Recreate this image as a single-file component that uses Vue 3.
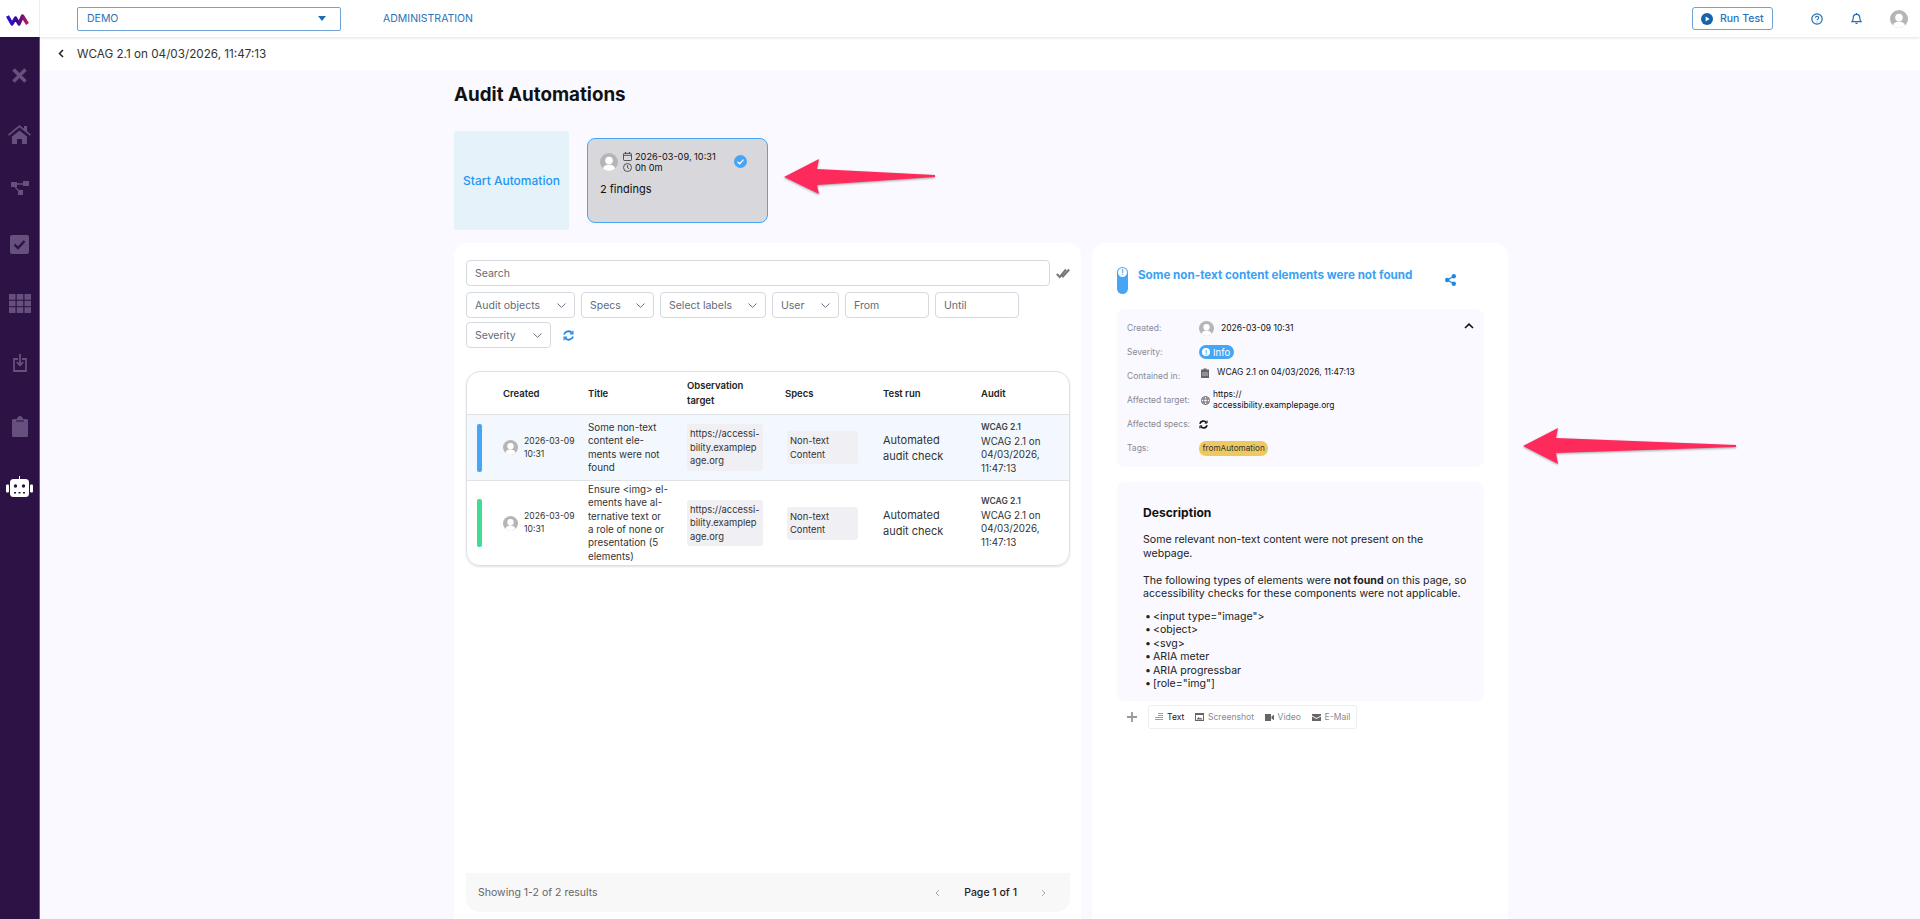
<template>
  <div class="app">
    <header class="topbar">
      <div class="logo-box">
        <svg width="23" height="12" viewBox="0 0 23 12">
          <defs>
            <linearGradient id="logoGrad" x1="0" x2="1" y1="0" y2="0">
              <stop offset="0" stop-color="#2a10e0" />
              <stop offset="0.5" stop-color="#3a0a8a" />
              <stop offset="1" stop-color="#c0185a" />
            </linearGradient>
          </defs>
          <path d="M1.500 2 L6 10 L9.500 4 L13 10 L16.500 2 L21.500 10" fill="none" stroke="url(#logoGrad)" stroke-width="3.400" stroke-linejoin="round" />
        </svg>
      </div>
      <div class="project-select">
        <span>DEMO</span>
        <svg width="8" height="5" viewBox="0 0 8 5"><path d="M0 0h8L4 5z" fill="#1f6cb4" /></svg>
      </div>
      <a class="admin-link">ADMINISTRATION</a>
      <div class="topbar-right">
        <button class="run-btn">
          <svg width="12" height="12" viewBox="0 0 12 12">
            <circle cx="6" cy="6" r="6" fill="#1464ad" />
            <path d="M4.600 3.400 L8.600 6 L4.600 8.600z" fill="#fff" />
          </svg>
          Run Test
        </button>
        <svg class="tb-icon" width="12" height="12" viewBox="0 0 12 12" fill="none" stroke="#1f6cb4">
          <circle cx="6" cy="6" r="5.200" stroke-width="1.200" />
          <path d="M4.400 4.800a1.600 1.600 0 1 1 2.400 1.400c-.6.3-.8.6-.8 1.100" stroke-width="1.100" />
          <circle cx="6" cy="9" r=".5" fill="#1f6cb4" stroke="none" />
        </svg>
        <svg class="tb-icon" width="11" height="13" viewBox="0 0 11 13" fill="none" stroke="#1f6cb4" stroke-width="1.200">
          <path d="M1 9.600h9c-1-1-1.200-2-1.200-3.600 0-2-1.300-3.600-3.300-3.600S2.200 4 2.200 6c0 1.600-.2 2.600-1.200 3.600z" />
          <path d="M4.500 11.400h2M5.500 1v1.200" />
        </svg>
        <svg class="avatar" width="18" height="18" viewBox="0 0 18 18">
          <circle cx="9" cy="9" r="9" fill="#b5b5b5" />
          <circle cx="9" cy="7.500" r="3.800" fill="#fff" />
          <path d="M2.800 15.500c1-3 3.500-4 6.200-4s5.200 1 6.200 4A9 9 0 0 1 2.800 15.500z" fill="#fff" />
        </svg>
      </div>
    </header>

    <div class="body">
      <aside class="sidebar">
        <nav class="side-nav">
          <svg width="15" height="15" viewBox="0 0 15 15"><path d="M1.500 1.500l12 12M13.500 1.500l-12 12" stroke="#66507d" stroke-width="3.600" /></svg>
          <svg width="23" height="19" viewBox="0 0 23 19" fill="#66507d"><path d="M11.500 0L0 9.500l1 1.200L11.500 2.200 22 10.700l1-1.200-4-3.300V1h-3v2.700zM4 11.500l7.500-6 7.500 6V19h-5v-5H9v5H4z" /></svg>
          <svg width="18" height="14" viewBox="0 0 18 14" fill="#66507d"><path d="M0 1h6v5H0zM12 0h6v5h-6zM7 9h5v5H7z" /><path d="M6 3h6M4 6l4 4" stroke="#66507d" stroke-width="1.300" /></svg>
          <svg width="19" height="19" viewBox="0 0 19 19"><rect width="19" height="19" rx="2" fill="#66507d" /><path d="M4.500 9.500l3.500 3.500 6.500-7" fill="none" stroke="#2d1245" stroke-width="2.400" /></svg>
          <svg width="22" height="19" viewBox="0 0 22 19" fill="#66507d"><path d="M0 0h6.500v5.700H0zM7.700 0h6.600v5.700H7.700zM15.500 0H22v5.700h-6.500zM0 6.700h6.500v5.600H0zM7.700 6.700h6.600v5.600H7.700zM15.500 6.700H22v5.600h-6.500zM0 13.300h6.500V19H0zM7.700 13.300h6.600V19H7.700zM15.500 13.300H22V19h-6.500z" /></svg>
          <svg width="14" height="18" viewBox="0 0 14 18" fill="none" stroke="#66507d" stroke-width="1.800"><path d="M5 5H1v12h12V5H9" /><path d="M7 0v11M3.800 8L7 11.500 10.200 8" /></svg>
          <svg width="16" height="21" viewBox="0 0 16 21" fill="#66507d"><path d="M1.500 3H5c0-1.500 1.300-3 3-3s3 1.500 3 3h3.500A1.500 1.500 0 0 1 16 4.500v15a1.500 1.500 0 0 1-1.500 1.500h-13A1.500 1.500 0 0 1 0 19.500v-15A1.500 1.500 0 0 1 1.500 3z" /><path d="M4 5h8" stroke="#2d1245" stroke-width="1" /></svg>
          <svg width="27" height="21" viewBox="0 0 27 21" fill="#fff"><path d="M13 0h1v3h-1z" /><rect x="4" y="3" width="19" height="18" rx="3.500" /><rect x="0" y="8.500" width="3" height="8" rx="1" /><rect x="24" y="8.500" width="3" height="8" rx="1" /><circle cx="9.500" cy="10" r="1.700" fill="#2d1245" /><circle cx="17.500" cy="10" r="1.700" fill="#2d1245" /><path d="M8 16h2v1.500H8zM12.500 16h2v1.500h-2zM17 16h2v1.500h-2z" fill="#2d1245" /></svg>
        </nav>
      </aside>

      <main class="main">
        <div class="subheader">
          <svg width="6" height="9" viewBox="0 0 6 9"><path d="M5 1L1.500 4.500 5 8" fill="none" stroke="#222" stroke-width="1.500" /></svg>
          <span>WCAG 2.1 on 04/03/2026, 11:47:13</span>
        </div>

        <div class="content">
          <h1 class="page-title">Audit Automations</h1>

          <div class="automation-row">
            <div class="start-card">Start Automation</div>
            <div class="run-card">
              <div class="run-head">
                <svg width="18" height="18" viewBox="0 0 18 18">
                  <circle cx="9" cy="9" r="9" fill="#b5b5b5" />
                  <circle cx="9" cy="7.500" r="3.800" fill="#fff" />
                  <path d="M2.800 15.500c1-3 3.500-4 6.200-4s5.200 1 6.200 4A9 9 0 0 1 2.800 15.500z" fill="#fff" />
                </svg>
                <div class="run-meta">
                  <div class="meta-line">
                    <svg width="9" height="9" viewBox="0 0 9 9" fill="none" stroke="#333" stroke-width=".8"><rect x=".5" y="1.300" width="8" height="7.200" rx="1" /><path d="M.5 3.300h8M2.500 0v2M6.500 0v2" /></svg>
                    2026-03-09, 10:31
                  </div>
                  <div class="meta-line">
                    <svg width="9" height="9" viewBox="0 0 9 9" fill="none" stroke="#333" stroke-width=".8"><circle cx="4.500" cy="4.500" r="4" /><path d="M4.500 2v2.700l1.600 1" /></svg>
                    0h 0m
                  </div>
                </div>
                <svg class="run-check" width="13" height="13" viewBox="0 0 13 13">
                  <circle cx="6.500" cy="6.500" r="6.500" fill="#46a6f5" />
                  <path d="M3.500 6.800l2.200 2 3.800-4.200" fill="none" stroke="#fff" stroke-width="1.300" />
                </svg>
              </div>
              <div class="run-findings">2 findings</div>
            </div>
          </div>

          <div class="panels">
            <section class="list-panel">
              <div class="search-row">
                <div class="field search">Search</div>
                <svg width="14" height="11" viewBox="0 0 14 11" fill="none" stroke="#777" stroke-width="2"><path d="M.8 6l3 3L10 1.500M5 6l2 2.500 6.200-7" /></svg>
              </div>
              <div class="filters">
                <div v-for="f in filters" :key="f.label" class="field" :class="f.cls">
                  {{ f.label }}
                  <svg v-if="f.select" width="9" height="5" viewBox="0 0 9 5"><path d="M.5.500l4 3.800 4-3.800" fill="none" stroke="#6b7280" stroke-width="1" /></svg>
                </div>
                <svg class="refresh" width="11" height="11" viewBox="0 0 11 11" fill="none" stroke="#1e88e5" stroke-width="1.800">
                  <path d="M1 4.500A4.600 4.600 0 0 1 9 3M10 6.500A4.600 4.600 0 0 1 2 8" />
                  <path d="M9.900.800v3H7M1.100 10.200v-3H4" stroke-width="1.200" />
                </svg>
              </div>

              <div class="table">
                <div class="tr thead">
                  <div></div>
                  <div>Created</div>
                  <div>Title</div>
                  <div>Observation<br />target</div>
                  <div>Specs</div>
                  <div>Test run</div>
                  <div>Audit</div>
                </div>
                <div v-for="row in rows" :key="row.title" class="tr" :class="{ active: row.active }">
                  <div class="bar-cell"><span class="sev-bar" :class="row.sev"></span></div>
                  <div class="created">
                    <svg width="15" height="15" viewBox="0 0 18 18">
                      <circle cx="9" cy="9" r="9" fill="#b5b5b5" />
                      <circle cx="9" cy="7.500" r="3.800" fill="#fff" />
                      <path d="M2.800 15.500c1-3 3.500-4 6.200-4s5.200 1 6.200 4A9 9 0 0 1 2.800 15.500z" fill="#fff" />
                    </svg>
                    <span>2026-03-09<br />10:31</span>
                  </div>
                  <div class="title-cell">{{ row.title }}</div>
                  <div><span class="chip chip-url">https://accessi-<br />bility.examplep<br />age.org</span></div>
                  <div><span class="chip chip-spec">Non-text<br />Content</span></div>
                  <div class="testrun">Automated<br />audit check</div>
                  <div class="audit"><b>WCAG 2.1</b><br />WCAG 2.1 on<br />04/03/2026,<br />11:47:13</div>
                </div>
              </div>

              <div class="pager">
                <span>Showing 1-2 of 2 results</span>
                <div class="pager-nav">
                  <svg width="5" height="8" viewBox="0 0 5 8"><path d="M4 1L1 4l3 3" fill="none" stroke="#aaa" /></svg>
                  <b>Page 1 of 1</b>
                  <svg width="5" height="8" viewBox="0 0 5 8"><path d="M1 1l3 3-3 3" fill="none" stroke="#aaa" /></svg>
                </div>
              </div>
            </section>

            <section class="detail-panel">
              <div class="detail-head">
                <div class="sev-pill"><span>!</span></div>
                <h2>Some non-text content elements were not found</h2>
                <svg class="share" width="11" height="12" viewBox="0 0 11 12" fill="#1e88e5">
                  <circle cx="2.200" cy="6" r="2.200" /><circle cx="8.800" cy="2.200" r="2.200" /><circle cx="8.800" cy="9.800" r="2.200" />
                  <path d="M2.200 6l6.600-3.800M2.200 6l6.600 3.800" stroke="#1e88e5" stroke-width="1.200" />
                </svg>
              </div>

              <div class="info-card">
                <svg class="collapse" width="10" height="6" viewBox="0 0 10 6"><path d="M1 5l4-3.800L9 5" fill="none" stroke="#111" stroke-width="1.600" /></svg>
                <div class="info-grid">
                  <div class="lbl">Created:</div>
                  <div class="val">
                    <svg width="15" height="15" viewBox="0 0 18 18">
                      <circle cx="9" cy="9" r="9" fill="#b5b5b5" />
                      <circle cx="9" cy="7.500" r="3.800" fill="#fff" />
                      <path d="M2.800 15.500c1-3 3.500-4 6.200-4s5.200 1 6.200 4A9 9 0 0 1 2.800 15.500z" fill="#fff" />
                    </svg>
                    <span class="after-avatar">2026-03-09 10:31</span>
                  </div>
                  <div class="lbl">Severity:</div>
                  <div class="val"><span class="sev-badge"><i>!</i>Info</span></div>
                  <div class="lbl">Contained in:</div>
                  <div class="val val-raised">
                    <svg class="val-icon" width="8" height="10" viewBox="0 0 8 10" fill="#666"><path d="M0 1.500h2.500V.5h3v1H8V10H0z" /><path d="M2 4v4M4 4v4M6 4v4" stroke="#f9f9ff" stroke-width=".6" /></svg>
                    WCAG 2.1 on 04/03/2026, 11:47:13
                  </div>
                  <div class="lbl">Affected target:</div>
                  <div class="val">
                    <svg class="val-icon globe" width="9" height="9" viewBox="0 0 9 9" fill="none" stroke="#666" stroke-width=".9"><circle cx="4.500" cy="4.500" r="4" /><ellipse cx="4.500" cy="4.500" rx="1.800" ry="4" /><path d="M.5 3h8M.5 6h8" /></svg>
                    <span>https://<br />accessibility.examplepage.org</span>
                  </div>
                  <div class="lbl">Affected specs:</div>
                  <div class="val">
                    <svg width="9" height="9" viewBox="0 0 11 11" fill="none" stroke="#111" stroke-width="2">
                      <path d="M1 4.500A4.600 4.600 0 0 1 9 3M10 6.500A4.600 4.600 0 0 1 2 8" />
                      <path d="M9.900.800v3H7M1.100 10.200v-3H4" stroke-width="1.200" />
                    </svg>
                  </div>
                  <div class="lbl">Tags:</div>
                  <div class="val"><span class="tag">fromAutomation</span></div>
                </div>
              </div>

              <div class="desc-card">
                <h3>Description</h3>
                <p>Some relevant non-text content were not present on the webpage.</p>
                <p>The following types of elements were <b>not found</b> on this page, so accessibility checks for these components were not applicable.</p>
                <ul>
                  <li>&lt;input type="image"&gt;</li>
                  <li>&lt;object&gt;</li>
                  <li>&lt;svg&gt;</li>
                  <li>ARIA meter</li>
                  <li>ARIA progressbar</li>
                  <li>[role="img"]</li>
                </ul>
              </div>

              <div class="composer">
                <svg width="10" height="10" viewBox="0 0 10 10"><path d="M5 0v10M0 5h10" stroke="#999" stroke-width="1.800" /></svg>
                <div class="composer-tabs">
                  <span class="tab on">
                    <svg width="8" height="8" viewBox="0 0 8 8" stroke="#888" stroke-width=".8"><path d="M3 .5h5M3 2.500h5M0 4.500h8M0 6.500h8" /></svg>
                    Text
                  </span>
                  <span class="tab">
                    <svg width="9" height="8" viewBox="0 0 9 8" fill="#666"><path d="M0 0h9v8H0zM1 2v5h7V2z" fill-rule="evenodd" /><path d="M1.500 6.500l2-2.500 1.500 1.500 1-1 1.500 2z" /></svg>
                    Screenshot
                  </span>
                  <span class="tab">
                    <svg width="9" height="7" viewBox="0 0 9 7" fill="#666"><path d="M0 0h6v7H0zM6.500 2.500L9 .8v5.400L6.500 4.500z" /></svg>
                    Video
                  </span>
                  <span class="tab">
                    <svg width="9" height="7" viewBox="0 0 9 7" fill="#666"><path d="M0 0h9v1.500L4.500 4 0 1.500zM0 2.500L4.500 5 9 2.500V7H0z" /></svg>
                    E-Mail
                  </span>
                </div>
              </div>
            </section>
          </div>
        </div>
      </main>
    </div>

    <!-- annotation arrows drawn over the screenshot -->
    <svg class="arrow arrow-one" width="160" height="44" viewBox="0 0 160 44">
      <path d="M2 21L37 3 35 13 153 19 153 21 35 29 37 38z" fill="#fe2a5c" />
    </svg>
    <svg class="arrow arrow-two" width="224" height="44" viewBox="0 0 224 44">
      <path d="M2 19L37 1 35 11 215 18 215 20 35 26 37 37z" fill="#fe2a5c" />
    </svg>
  </div>
</template>

<script setup>
const filters = [
  { label: 'Audit objects', cls: 'f-audit', select: true },
  { label: 'Specs', cls: 'f-specs', select: true },
  { label: 'Select labels', cls: 'f-labels', select: true },
  { label: 'User', cls: 'f-user', select: true },
  { label: 'From', cls: 'f-date', select: false },
  { label: 'Until', cls: 'f-date', select: false },
  { label: 'Severity', cls: 'f-sev', select: true }
]

const rows = [
  { title: 'Some non-text\ncontent ele-\nments were not\nfound', sev: 'blue', active: true },
  { title: 'Ensure <img> el-\nements have al-\nternative text or\na role of none or\npresentation (5\nelements)', sev: 'green', active: false }
]
</script>

<style>
html, body { margin: 0; background: #f9f9ff; }
</style>

<style scoped>
.app {
  position: relative;
  height: 919px;
  overflow: hidden;
  background: #f9f9ff;
  font-family: Inter, "Liberation Sans", sans-serif;
  color: #222;
  font-size: 11px;
}

/* top bar */
.topbar {
  display: flex;
  align-items: center;
  height: 37px;
  background: #fff;
  box-shadow: 0 1px 3px rgba(0, 0, 0, 0.12);
  position: relative;
  z-index: 2;
}
.logo-box {
  width: 40px;
  height: 37px;
  box-sizing: border-box;
  border-right: 1px solid #eee;
  display: flex;
  align-items: center;
  padding: 3px 0 0 6px;
  flex: none;
}
.project-select {
  margin-left: 37px;
  height: 22px;
  border: 1px solid #6fa3d6;
  border-radius: 2px;
  display: flex;
  align-items: center;
  justify-content: space-between;
  padding: 0 14px 0 9px;
  color: #2a72b8;
  font-size: 10.5px;
  width: 239px;
}
.admin-link {
  margin-left: 42px;
  color: #2a72b8;
  font-size: 10.5px;
}
.topbar-right {
  margin-left: auto;
  display: flex;
  align-items: center;
  padding-right: 12px;
}
.run-btn {
  display: flex;
  align-items: center;
  gap: 7px;
  width: 81px;
  height: 23px;
  padding: 0 0 0 8px;
  border: 1px solid #6fa3d6;
  border-radius: 3px;
  background: #fff;
  color: #2a72b8;
  font: 500 10.5px Inter, sans-serif;
  margin-right: 38px;
}
.tb-icon { margin-right: 28px; }
.avatar { display: block; }

/* sidebar */
.body { display: flex; height: 882px; }
.sidebar {
  width: 39px;
  flex: none;
  background: #2d1245;
  border-right: 1px solid #6a5a80;
}
.side-nav {
  display: grid;
  grid-template-rows: 58px 60px 48px 64px 54px 66px 60px 60px;
  justify-items: center;
  align-items: center;
  padding-top: 9px;
}

/* main area */
.main { flex: 1; min-width: 0; }
.subheader {
  height: 33px;
  background: #fff;
  display: flex;
  align-items: center;
  gap: 13px;
  padding-left: 18px;
  font-size: 11.700px;
  color: #333;
}
.content {
  width: 1054px;
  margin-left: 414px;
}
.page-title {
  margin: 13px 0 0;
  height: 48px;
  font-size: 18.800px;
  font-weight: 700;
  line-height: 24px;
  color: #111;
}
.automation-row {
  display: flex;
  align-items: center;
  gap: 18px;
}
.start-card {
  width: 115px;
  height: 99px;
  display: flex;
  align-items: center;
  justify-content: center;
  background: #e6f2f9;
  border-radius: 3px;
  color: #2196f3;
  font-size: 12px;
  font-weight: 500;
}
.run-card {
  width: 181px;
  height: 85px;
  box-sizing: border-box;
  padding: 12px 12px;
  background: #d8d7dc;
  border: 1.500px solid #46a6f5;
  border-radius: 8px;
  color: #111;
}
.run-head { display: flex; align-items: center; gap: 5px; }
.run-meta { font-size: 9.200px; line-height: 11px; }
.meta-line { display: flex; align-items: center; gap: 3px; }
.run-check { margin-left: 13px; margin-top: -2px; }
.run-findings { margin-top: 9px; font-size: 11px; }

.panels {
  display: flex;
  gap: 11px;
  margin-top: 13px;
}
.list-panel,
.detail-panel {
  background: #fff;
  border-radius: 13px 13px 0 0;
  box-sizing: border-box;
  height: 678px;
}
.list-panel {
  width: 627px;
  padding: 17px 11px 0 12px;
  display: flex;
  flex-direction: column;
}
.search-row { display: flex; align-items: center; gap: 6px; }
.field {
  box-sizing: border-box;
  height: 26px;
  border: 1px solid #d5dae1;
  border-radius: 4px;
  display: flex;
  align-items: center;
  justify-content: space-between;
  padding: 0 8px;
  font-size: 10.500px;
  color: #5f6b7a;
  background: #fff;
}
.search { width: 584px; }
.filters {
  margin-top: 6px;
  display: flex;
  flex-wrap: wrap;
  align-items: center;
  gap: 4px 6px;
  width: 570px;
}
.f-audit { width: 109px; }
.f-specs { width: 73px; }
.f-labels { width: 106px; }
.f-user { width: 67px; }
.f-date { width: 84px; }
.f-sev { width: 85px; }
.refresh { margin-left: 6px; }

/* table */
.table {
  margin-top: 23px;
  border: 1px solid #dcdfe4;
  border-radius: 14px;
  overflow: hidden;
  box-shadow: 0 1px 2px rgba(0, 0, 0, 0.12);
}
.tr {
  display: grid;
  grid-template-columns: 36px 85px 99px 98px 98px 98px auto;
  align-items: center;
  height: 65px;
  font-size: 9.800px;
  line-height: 13.400px;
  border-top: 1px solid #dfe3e8;
  color: #333;
}
.tr:nth-child(3) { height: 84px; }
.tr:nth-child(3) .audit { margin-top: -3px; }
.tr.active { background: #f2f8fd; }
.thead {
  height: 42px;
  border-top: 0;
  font-weight: 600;
  font-size: 9.500px;
  line-height: 15px;
  color: #222;
}
.bar-cell { padding-left: 10px; }
.sev-bar {
  display: block;
  width: 5px;
  height: 48px;
  border-radius: 2px;
}
.sev-bar.blue { background: #46a6f5; }
.sev-bar.green { background: #3fdc94; }
.created { display: flex; align-items: center; gap: 6px; font-size: 8.600px; line-height: 13px; }
.title-cell { white-space: pre; }
.chip {
  display: inline-block;
  background: #f0eff3;
  border-radius: 3px;
  padding: 3px;
  font-size: 9.400px;
  line-height: 13.500px;
  vertical-align: middle;
}
.chip-url { width: 76px; box-sizing: border-box; white-space: nowrap; }
.chip-spec { margin-left: 2px; width: 71px; box-sizing: border-box; padding: 3px; }
.testrun { font-size: 11px; line-height: 16px; }
.audit { line-height: 13.500px; }
.audit b { font-size: 8.500px; font-weight: 600; color: #444; }

.pager {
  margin-top: auto;
  margin-bottom: 9px;
  height: 39px;
  display: flex;
  align-items: center;
  justify-content: space-between;
  padding: 0 12px;
  background: #f8f8f8;
  border-radius: 0 0 14px 14px;
  font-size: 10.500px;
  color: #666;
}
.pager-nav { display: flex; align-items: center; gap: 24px; padding-right: 12px; }
.pager-nav b { font-weight: 500; color: #222; }

/* detail */
.detail-panel { width: 416px; padding: 0 24px 0 25px; }
.detail-head {
  position: relative;
  height: 66px;
  padding-top: 24px;
  box-sizing: border-box;
  display: flex;
  align-items: flex-start;
}
.sev-pill {
  width: 11px;
  height: 27px;
  border-radius: 6px;
  background: #46a6f5;
  flex: none;
}
.sev-pill span {
  display: flex;
  align-items: center;
  justify-content: center;
  width: 9px;
  height: 9px;
  margin: 1px;
  border-radius: 50%;
  background: #fff;
  font-size: 7px;
  font-weight: 700;
  color: #46a6f5;
}
.detail-head h2 {
  margin: 1px 0 0 10px;
  font-size: 11.650px;
  font-weight: 700;
  line-height: 15px;
  color: #3aa2f5;
  white-space: nowrap;
}
.share { position: absolute; left: 328px; top: 31px; }

.info-card {
  position: relative;
  width: 367px;
  height: 158px;
  box-sizing: border-box;
  padding: 7px 10px;
  background: #f9f9ff;
  border-radius: 8px;
}
.collapse { position: absolute; right: 10px; top: 14px; }
.info-grid {
  display: grid;
  grid-template-columns: 72px 1fr;
  grid-auto-rows: 24px;
  align-items: center;
}
.lbl { font-size: 8.500px; color: #8a8a95; }
.val { display: flex; align-items: center; font-size: 8.500px; line-height: 11px; color: #111; }
.val-raised { margin-top: -7px; }
.after-avatar { margin-left: 7px; }
.val-icon { margin-right: 8px; margin-left: 2px; }
.globe { margin-right: 3px; }
.sev-badge {
  display: inline-flex;
  align-items: center;
  gap: 3px;
  height: 14px;
  padding: 0 4px 0 3px;
  border-radius: 7px;
  background: #46a6f5;
  color: #fff;
  font-size: 9.500px;
}
.sev-badge i {
  display: flex;
  align-items: center;
  justify-content: center;
  width: 8px;
  height: 8px;
  border-radius: 50%;
  background: #fff;
  color: #46a6f5;
  font-size: 6px;
  font-style: normal;
  font-weight: 700;
}
.tag {
  height: 15px;
  line-height: 15px;
  padding: 0 3.500px;
  border-radius: 7px;
  background: #edc95f;
  font-size: 8.200px;
  color: #333;
}

.desc-card {
  width: 367px;
  height: 219px;
  margin-top: 15px;
  box-sizing: border-box;
  padding: 23px 16px 0 26px;
  background: #f9f9ff;
  border-radius: 8px;
  font-size: 10.600px;
  line-height: 13.500px;
  color: #222;
}
.desc-card h3 {
  margin: 0 0 12px;
  font-size: 12.100px;
  font-weight: 700;
  color: #111;
  line-height: 16px;
}
.desc-card p { margin: 0 0 13.500px; }
.desc-card ul { margin: -4.500px 0 0; padding: 0; list-style: none; }
.desc-card li::before {
  content: "•";
  display: inline-block;
  width: 8px;
  margin-left: 2px;
}

.composer {
  display: flex;
  align-items: center;
  gap: 11px;
  margin: 4px 0 0 10px;
}
.composer-tabs {
  display: flex;
  align-items: center;
  gap: 10.500px;
  height: 22px;
  padding: 0 6px;
  border: 1px solid #eee;
  border-radius: 3px;
  font-size: 8.600px;
  color: #8a8a95;
}
.tab { display: flex; align-items: center; gap: 4px; }
.tab.on { color: #222; }

/* annotation arrows */
.arrow {
  position: absolute;
  filter: drop-shadow(0 1px 1px rgba(0, 0, 0, 0.35));
  pointer-events: none;
}
.arrow-one { left: 782px; top: 156px; }
.arrow-two { left: 1521px; top: 427px; }
</style>
